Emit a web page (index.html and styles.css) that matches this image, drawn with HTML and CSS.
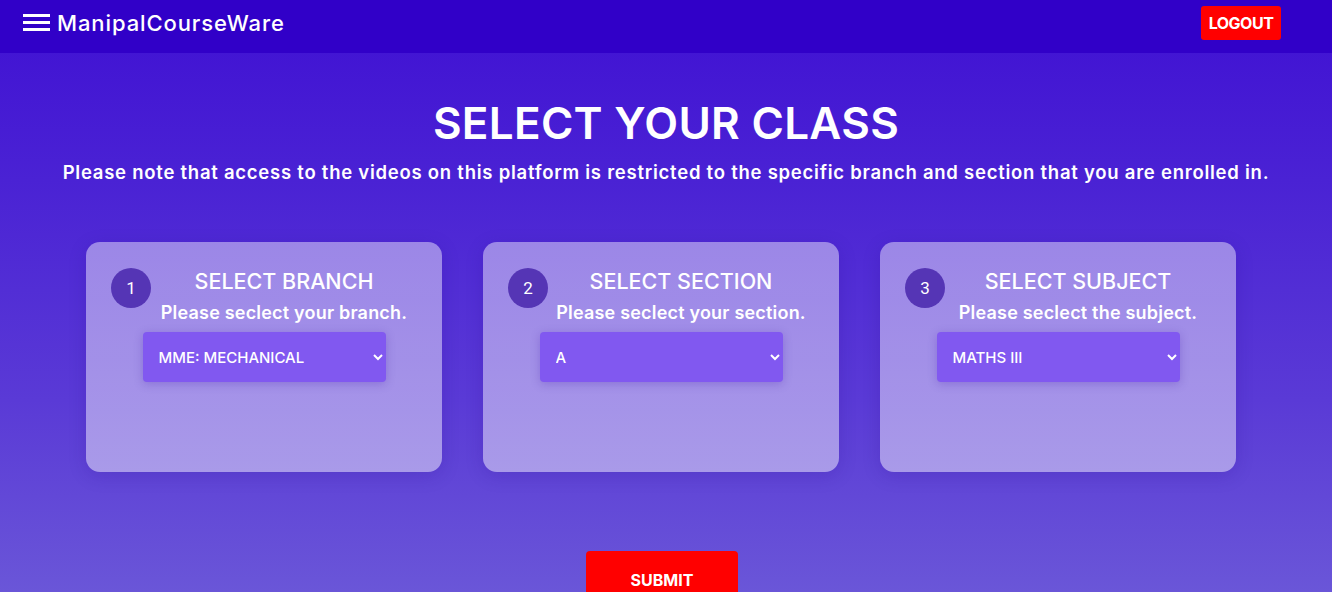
FILE: index.html
```html
<!DOCTYPE html>
<html lang="en">
<head>
<meta charset="utf-8">
<title>ManipalCourseWare</title>
<link rel="stylesheet" href="styles.css">
</head>
<body>
<nav class="navbar">
  <div class="brand">
    <span class="burger"><span></span><span></span><span></span></span>
    <span class="brand-name">ManipalCourseWare</span>
  </div>
  <button class="logout">LOGOUT</button>
</nav>
<main class="main">
  <h1 class="title">SELECT YOUR CLASS</h1>
  <p class="note">Please note that access to the videos on this platform is restricted to the specific branch and section that you are enrolled in.</p>
  <div class="cards">
    <div class="card">
      <div class="card-head">
        <span class="num">1</span>
        <div class="card-text">
          <h2 class="card-title">SELECT BRANCH</h2>
          <p class="card-sub">Please seclect your branch.</p>
        </div>
      </div>
      <select class="picker"><option>MME: MECHANICAL</option></select>
    </div>
    <div class="card">
      <div class="card-head">
        <span class="num">2</span>
        <div class="card-text">
          <h2 class="card-title">SELECT SECTION</h2>
          <p class="card-sub">Please seclect your section.</p>
        </div>
      </div>
      <select class="picker"><option>A</option></select>
    </div>
    <div class="card">
      <div class="card-head">
        <span class="num">3</span>
        <div class="card-text">
          <h2 class="card-title">SELECT SUBJECT</h2>
          <p class="card-sub">Please seclect the subject.</p>
        </div>
      </div>
      <select class="picker"><option>MATHS III</option></select>
    </div>
  </div>
  <button class="submit">SUBMIT</button>
</main>
</body>
</html>
```
FILE: styles.css
```css
* { box-sizing: border-box; }
html, body { margin: 0; height: 100%; }
body {
  font-family: "Inter", "Open Sans", sans-serif;
  color: #fff;
  background: linear-gradient(180deg, #3f10d3 0px, #4a22d4 180px, #5a3ad6 400px, #6a56d8 592px);
  overflow: hidden;
}
.navbar {
  height: 53px;
  background: #3100c8;
  display: flex;
  align-items: flex-start;
  justify-content: space-between;
  padding: 0 51px 0 23px;
}
.brand {
  display: flex;
  align-items: center;
  gap: 7px;
  height: 45px;
}
.burger {
  display: flex;
  flex-direction: column;
  gap: 4.5px;
  width: 27px;
}
.burger span {
  display: block;
  height: 2.6px;
  background: #fff;
}
.brand-name {
  font-size: 22px;
  font-weight: 500;
  letter-spacing: 0.9px;
}
.logout {
  margin-top: 6px;
  width: 80px;
  height: 34px;
  border: none;
  border-radius: 3px;
  background: #ff0000;
  color: #fff;
  font-family: "Inter", sans-serif;
  font-weight: 700;
  font-size: 16px;
  letter-spacing: -0.5px;
  padding: 0;
}
.main {
  display: flex;
  flex-direction: column;
  align-items: center;
  padding-top: 40px;
}
.title {
  margin: 0;
  font-size: 44px;
  font-weight: 600;
  line-height: 60px;
  letter-spacing: 0.3px;
}
.note {
  margin: 4px 0 0;
  font-size: 18.5px;
  font-weight: 600;
  line-height: 30px;
  letter-spacing: 0.75px;
}
.cards {
  display: flex;
  gap: 41px;
  margin-top: 55px;
  margin-right: 10px;
}
.card {
  width: 356px;
  height: 230px;
  border-radius: 14px;
  background: linear-gradient(180deg, rgba(255,255,255,0.44), rgba(255,255,255,0.46));
  box-shadow: 0 4px 18px rgba(40, 10, 140, 0.18);
  padding: 26px 25px 0;
  display: flex;
  flex-direction: column;
  align-items: center;
}
.card-head {
  display: flex;
  align-items: flex-start;
  width: 100%;
}
.num {
  flex: none;
  width: 40px;
  height: 40px;
  border-radius: 50%;
  background: #5535b5;
  display: flex;
  align-items: center;
  justify-content: center;
  font-family: "Roboto", sans-serif;
  font-size: 17px;
  font-weight: 400;
}
.card-text {
  flex: 1;
  text-align: center;
}
.card-title {
  margin: 0;
  font-size: 21.5px;
  font-weight: 500;
  line-height: 26px;
}
.card-sub {
  margin: 8px 0 0;
  font-size: 18px;
  font-weight: 600;
  line-height: 22px;
  letter-spacing: 0.2px;
}
.picker {
  margin-top: 8px;
  width: 243px;
  height: 50px;
  border: none;
  border-radius: 4px;
  background: #8158f0;
  color: #fff;
  font-family: "Inter", sans-serif;
  font-size: 15px;
  font-weight: 500;
  padding: 0 12px;
  box-shadow: 0 2px 10px rgba(60, 20, 160, 0.25);
}
.submit {
  margin-top: 79px;
  margin-right: 8px;
  width: 152px;
  height: 58px;
  border: none;
  border-radius: 4px;
  background: #ff0000;
  color: #fff;
  font-family: "Inter", sans-serif;
  font-weight: 700;
  font-size: 16px;
  padding: 0;
}
```
